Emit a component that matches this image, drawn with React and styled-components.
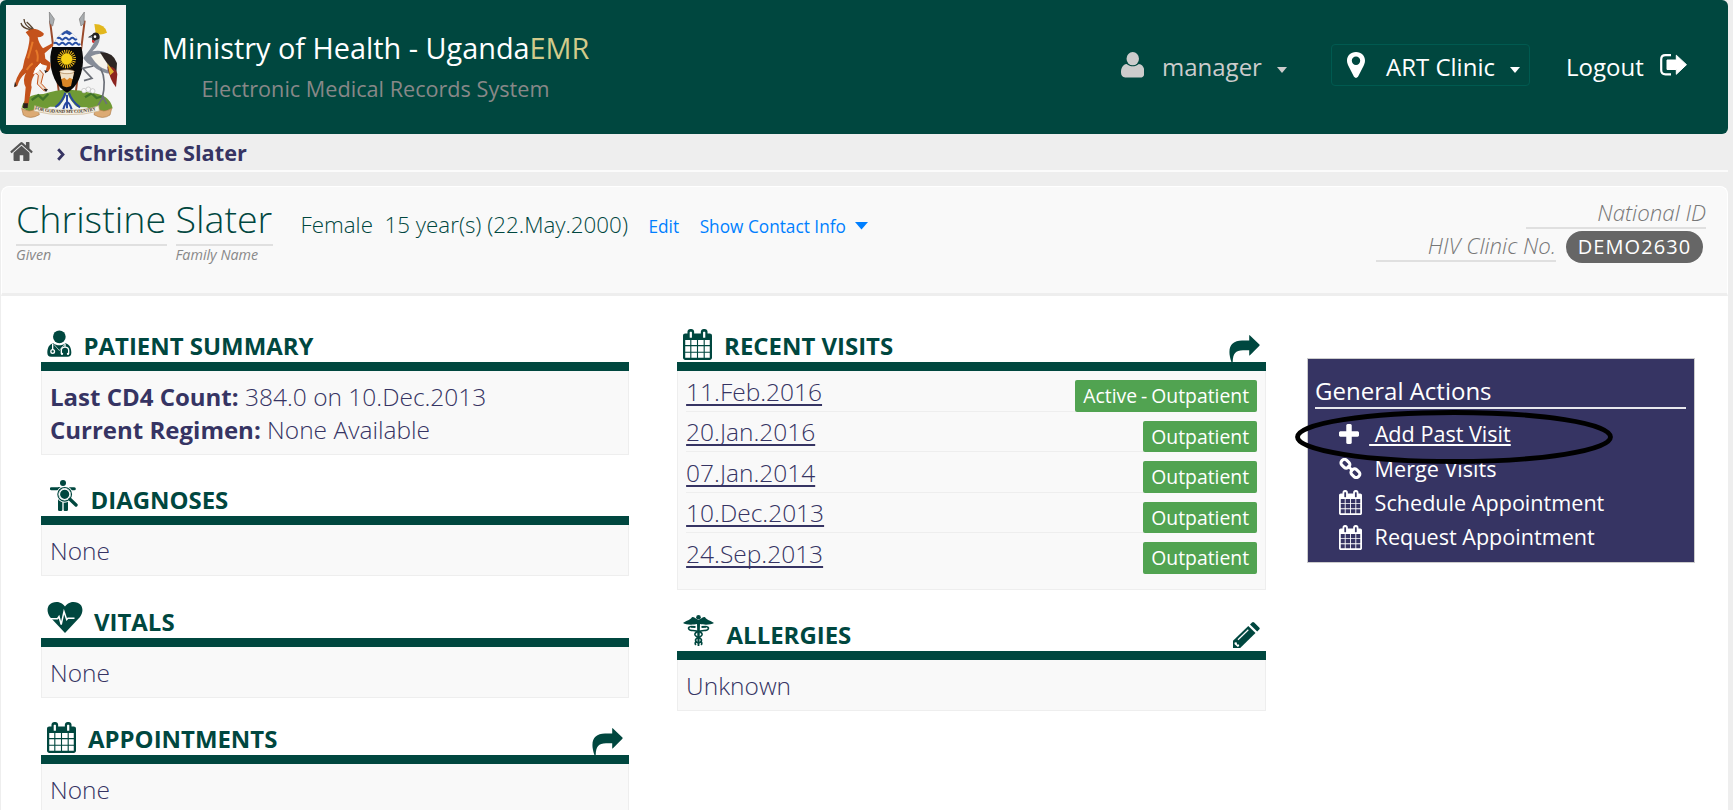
import React from 'react';
import styled, { createGlobalStyle } from 'styled-components';

const green = '#00473f';
const navy = '#363463';

const Global = createGlobalStyle`
  * { box-sizing: border-box; }
  body { margin: 0; background: #eee; font-family: "Open Sans", "Noto Sans", sans-serif; color: ${navy}; overflow: hidden; }
  a { color: inherit; }
  svg { display: block; flex: none; }
`;

const Page = styled.div`
  width: 1728px;
  height: 810px;
  overflow: hidden;
  display: flex;
  flex-direction: column;
`;

/* ---------- top bar ---------- */
const TopBar = styled.header`
  flex: none;
  height: 134px;
  background: ${green};
  border-radius: 6px;
  display: flex;
  align-items: flex-start;
  padding: 5px 0 0 6px;
`;
const Crest = styled.svg`
  width: 120px;
  height: 120px;
  background: #f4f4f4;
`;
const Brand = styled.div`
  width: 427px;
  margin-left: 36px;
  padding-top: 23px;
  text-align: center;
  white-space: nowrap;
`;
const BrandTitle = styled.div`
  font-size: 28.85px;
  line-height: 40px;
  color: #fff;
`;
const Gold = styled.span`color: #d2cb8b;`;
const BrandSub = styled.div`
  font-size: 21.65px;
  line-height: 42px;
  color: #888;
`;
const UserMenu = styled.nav`
  margin-left: auto;
  margin-top: 39px;
  height: 42px;
  display: flex;
  align-items: center;
  font-size: 24px;
  line-height: 42px;
  color: #fff;
  padding-right: 41px;
  white-space: nowrap;
`;
const UserItem = styled.div`
  display: flex;
  align-items: center;
  color: #ccc;
  margin-right: 44px;
`;
const LocationItem = styled.div`
  display: flex;
  align-items: center;
  width: 199px;
  height: 42px;
  border: 1.5px solid #005a50;
  border-radius: 4px;
  padding-left: 15px;
  margin-right: 36px;
`;
const MenuLabel = styled.span`
  width: ${p => p.$w}px;
  padding-top: 4px;
  margin-left: ${p => p.$gap}px;
`;
const LogoutSlot = styled.span`margin-left: 16px;`;
const Caret = styled.i`
  border: ${p => p.$s}px solid transparent;
  border-top: ${p => p.$h}px solid currentColor;
  border-bottom: 0;
  margin-top: ${p => p.$drop || 0}px;
  margin-left: ${p => p.$gap}px;
`;

/* ---------- breadcrumbs ---------- */
const Crumbs = styled.div`
  flex: none;
  height: 38px;
  border-bottom: 2px solid #fbfbfb;
  display: flex;
  align-items: center;
  padding: 0 0 1px 10px;
  font-size: 21.7px;
  font-weight: 700;
`;
const CrumbArrow = styled.svg`margin: 6px 14px 0 24px;`;
const CrumbText = styled.span`padding-top: 2px;`;

/* ---------- patient header ---------- */
const PatientBar = styled.section`
  flex: none;
  height: 110px;
  margin: 14px 0 0 1px;
  background: #f9f9f9;
  border: 1px solid #fff;
  border-bottom: 3px solid #eee;
  border-radius: 8px 8px 0 0;
  display: flex;
  padding-left: 14px;
  color: ${green};
`;
const NamePart = styled.div`
  width: ${p => p.$w}px;
  margin-right: 9px;
  padding-top: 7px;
`;
const BigName = styled.div`
  font-size: 37.6px;
  font-weight: 300;
  line-height: 49px;
  height: 52px;
  border-bottom: 2px solid #e0e0e0;
  white-space: nowrap;
`;
const NameHint = styled.div`
  font-size: 14.3px;
  font-style: italic;
  line-height: 20px;
  color: #888;
  margin-top: -1px;
`;
const Demographics = styled.div`
  display: flex;
  align-items: baseline;
  margin-left: 18.5px;
  height: 50px;
  padding-top: 22px;
  font-size: 22.35px;
  line-height: 32px;
  white-space: pre;
  font-weight: 300;
`;
const ActionLink = styled.a`
  font-size: 17.25px;
  font-weight: 400;
  color: #007fff;
  margin-left: ${p => p.$gap}px;
`;
const Identifiers = styled.div`
  margin-left: auto;
  padding: 10px 21px 0 0;
  display: flex;
  flex-direction: column;
  align-items: flex-end;
`;
const IdRow = styled.div`
  display: flex;
  height: 33px;
`;
const IdLabel = styled.div`
  width: 180px;
  height: 32px;
  border-bottom: 2px solid #e0e0e0;
  text-align: right;
  font-size: 22.3px;
  line-height: 32px;
  font-style: italic;
  font-weight: 300;
  color: #777;
`;
const IdBadge = styled.div`
  width: 137px;
  height: 32px;
  margin: 1px 3px 0 10px;
  border-radius: 16px;
  background: #666;
  color: #fff;
  font-size: 20px;
  line-height: 31px;
  letter-spacing: 1.1px;
  text-align: center;
`;

/* ---------- dashboard ---------- */
const Dashboard = styled.main`
  flex: 1;
  margin-left: 1px;
  background: #fff;
  display: flex;
  align-items: flex-start;
  padding: 30px 33px 0 39.5px;
`;
const Column = styled.div`
  width: ${p => p.$w}px;
  margin-right: ${p => p.$gap}px;
`;
const Widget = styled.section`margin-bottom: ${p => p.$gap}px;`;
const WidgetHead = styled.div`
  height: 45px;
  border-bottom: 9px solid ${green};
  display: flex;
  align-items: flex-end;
  padding: 0 6px 0 6px;
  color: ${green};
`;
const WidgetIcon = styled.span`
  width: ${p => p.$w}px;
  padding: 0 0 ${p => p.$up}px ${p => p.$left || 0}px;
`;
const WidgetTitle = styled.h2`
  flex: 1;
  margin: 0;
  font-size: 23.95px;
  font-weight: 700;
  line-height: 32px;
  white-space: nowrap;
`;
const WidgetBody = styled.div`
  border: 1.5px solid #eee;
  border-top: 0;
  background: #f9f9f9;
  padding: 9px 8px 8px 8.5px;
  font-size: 24.5px;
  font-weight: 300;
  line-height: 33px;
`;
const Fact = styled.div`
  b { font-weight: 700; font-size: 24px; }
`;
const VisitList = styled(WidgetBody)`padding: 0 8px 15px 8.5px;`;
const VisitRow = styled.div`
  height: 40.5px;
  display: flex;
  justify-content: space-between;
  align-items: flex-start;
  border-bottom: 1.5px solid ${p => (p.$last ? 'transparent' : '#eee')};
`;
const VisitLink = styled.a`
  margin-top: 3.6px;
  text-decoration: underline;
  text-decoration-thickness: 1.5px;
  text-underline-offset: 2.5px;
  text-decoration-skip-ink: none;
`;
const VisitTag = styled.span`
  margin-top: 9px;
  height: 31.5px;
  padding: 0 8px;
  border-radius: 2px;
  background: #51a351;
  color: #fff;
  font-size: 19.35px;
  font-weight: 400;
  line-height: 31px;
  word-spacing: -1px;
`;

const ActionsWrap = styled.aside`
  position: relative;
  width: 388px;
  margin-top: 32px;
`;
const Actions = styled.div`
  height: 204.5px;
  background: ${navy};
  border: 1.5px solid #ccc;
  padding: 16px 7.5px 0 7px;
  color: #fff;
`;
const ActionsTitle = styled.div`
  height: 34px;
  border-bottom: 2px solid #e8e8ee;
  font-size: 24px;
  line-height: 32px;
`;
const ActionList = styled.div`padding: 8px 0 0 24px;`;
const ActionRow = styled.div`
  display: flex;
  align-items: center;
  height: 34.4px;
  font-size: 21.6px;
  line-height: 34px;
  white-space: pre;
`;
const ActionIcon = styled.span`width: 30px;`;
const ActionText = styled.span`
  margin-left: ${p => (p.$underlined ? 0 : 5.5)}px;
  text-decoration: ${p => (p.$underlined ? 'underline' : 'none')};
  text-decoration-thickness: 1.5px;
  text-underline-offset: 2px;
`;
const Ring = styled.svg`
  position: absolute;
  left: -13px;
  top: 51px;
`;

/* ---------- icons ---------- */
const CAL = 'M192 1664h288v-288h-288v288zM544 1664h320v-288h-320v288zM192 1312h288v-320h-288v320zM544 1312h320v-320h-320v320zM192 928h288v-288h-288v288zM928 1664h320v-288h-320v288zM544 928h320v-288h-320v288zM1312 1664h288v-288h-288v288zM928 1312h320v-320h-320v320zM576 480v-288q0-13-9.5-22.5t-22.5-9.5h-64q-13 0-22.5 9.5t-9.5 22.5v288q0 13 9.5 22.5t22.5 9.5h64q13 0 22.5-9.5t9.5-22.5zM1312 1312h288v-320h-288v320zM928 928h320v-288h-320v288zM1312 928h288v-288h-288v288zM1344 480v-288q0-13-9.5-22.5t-22.5-9.5h-64q-13 0-22.5 9.5t-9.5 22.5v288q0 13 9.5 22.5t22.5 9.5h64q13 0 22.5-9.5t9.5-22.5zM1728 384v1280q0 52-38 90t-90 38h-1408q-52 0-90-38t-38-90v-1280q0-52 38-90t90-38h128v-96q0-66 47-113t113-47h64q66 0 113 47t47 113v96h384v-96q0-66 47-113t113-47h64q66 0 113 47t47 113v96h128q52 0 90 38t38 90z';
const HOME = 'M1408 992v480q0 26-19 45t-45 19h-384v-384h-256v384h-384q-26 0-45-19t-19-45v-480q0-1 .5-3t.5-3l575-474 575 474q1 2 1 6zm223-69l-62 74q-8 9-21 11h-3q-13 0-21-7l-692-577-692 577q-12 8-24 7-13-2-21-11l-62-74q-8-10-7-23.5t11-21.5l719-599q32-26 76-26t76 26l244 204v-195q0-14 9-23t23-9h192q14 0 23 9t9 23v408l219 182q10 8 11 21.5t-7 23.5z';
const PLUS = 'M1408 800v192q0 40-28 68t-68 28h-416v416q0 40-28 68t-68 28h-192q-40 0-68-28t-28-68v-416h-416q-40 0-68-28t-28-68v-192q0-40 28-68t68-28h416v-416q0-40 28-68t68-28h192q40 0 68 28t28 68v416h416q40 0 68 28t28 68z';

const CalendarIcon = ({ w, h }) => (
  <svg width={w} height={h} viewBox="64 0 1664 1792" preserveAspectRatio="none" fill="currentColor"><path d={CAL} /></svg>
);
const ShareIcon = () => (
  <svg width="31" height="27" viewBox="0 0 31 27" fill="currentColor">
    <path d="M20.2 .6 Q20.2 -.4 21 .4 L30.4 9.4 Q31 10 30.4 10.7 L21 20.3 Q20.2 21 20.2 20 V15.2 H14 C6.5 15.2 4 18.5 3.7 27 H2.4 C-2.5 13 2 5.6 13 5.6 H20.2 Z" />
  </svg>
);
const DoctorIcon = () => (
  <svg width="25" height="27" viewBox="0 0 75 80">
    <circle cx="37" cy="20" r="19" fill={green} />
    <path d="M19 39 C6 42 1 53 1 68 C1 76 5 80 12 80 H62 C69 80 73 76 73 68 C73 53 68 42 55 39 C45 47 29 47 19 39Z" fill={green} />
    <path d="M17 41 V60 M54 41 V51 M43 71 V61 C43 54 47 51 54 51 C61 51 65 54 65 61 V71" fill="none" stroke="#fff" strokeWidth="4" />
    <circle cx="17" cy="64" r="5.5" fill={green} stroke="#fff" strokeWidth="4" />
    <path d="M21 43 L37 61 L52 43" fill="none" stroke="#fff" strokeWidth="2" />
    <circle cx="45" cy="71" r="3.5" fill="#fff" /><circle cx="63" cy="71" r="3.5" fill="#fff" />
  </svg>
);
const DiagnosisIcon = () => (
  <svg width="28" height="31" viewBox="0 0 84 93">
    <circle cx="39" cy="9" r="9" fill={green} />
    <path d="M4 26 H73" stroke={green} strokeWidth="9" strokeLinecap="round" />
    <path d="M24 22 H54 V89 Q54 93 50 93 H44 Q41 93 41 89 V66 H37 V89 Q37 93 33 93 H28 Q24 93 24 89Z" fill={green} />
    <path d="M62 60 L79 77" stroke="#fff" strokeWidth="15" />
    <circle cx="44" cy="43" r="21" fill={green} stroke="#fff" strokeWidth="8" />
    <circle cx="44" cy="43" r="20.5" fill="none" stroke={green} strokeWidth="3.5" />
    <circle cx="44" cy="43" r="15.5" fill="none" stroke="#fff" strokeWidth="3.5" />
    <path d="M60 58 L78 75" stroke={green} strokeWidth="10" strokeLinecap="round" />
  </svg>
);
const HeartIcon = () => (
  <svg width="36" height="31" viewBox="0 0 36 31">
    <path d="M18 31 L3 15 C-1.5 9 0 0 9.5 0 C14 0 16.5 2.5 18 4.5 C19.5 2.5 22 0 26.5 0 C36 0 37.5 9 33 15Z" fill={green} />
    <path d="M4 16.7 H10.5 L12 14.5 L14.2 22.5 L17 9.5 L19.7 17.5 L21 16.2 H27.5" fill="none" stroke="#fff" strokeWidth="1.5" />
  </svg>
);
const CaduceusIcon = () => (
  <svg width="31" height="31" viewBox="0 0 31 31" fill={green}>
    <circle cx="15.5" cy="2.3" r="2.3" />
    <path d="M15.5 5 C18 4 19 2 22 2 C23 5 28 5.5 31 8 C28 10 21 10 17 9 L16.4 31 H14.6 L14 9 C10 10 3 10 0 8 C3 5.5 8 5 9 2 C12 2 13 4 15.5 5Z" />
    <path d="M8 11.5 C4 12 5 15.5 10 15.5 C14 15.8 20 17 19 20 C18 22.5 12.5 22.5 12.5 25 Q12.5 27 15.5 28 M23 11.5 C27 12 26 15.5 21 15.5 C17 15.8 11 17 12 20 C13 22.5 18.5 22.5 18.5 25 Q18.5 27 15.5 28 M12.8 30 Q11.5 28 13 26.5 M18.2 30 Q19.5 28 18 26.5" fill="none" stroke={green} strokeWidth="1.6" />
    <path d="M8 11.7 L12.5 12 M23 11.7 L18.5 12" stroke={green} strokeWidth="2" />
  </svg>
);
const PencilIcon = () => (
  <svg width="27" height="26" viewBox="0 0 27 26">
    <path d="M0 26 V18.8 L15.3 4 L22.5 11 L7.2 26Z" fill={green} />
    <path d="M17 2.4 L19 .6 Q20 -.4 21.2 .6 L26.2 5.4 Q27.3 6.5 26.2 7.6 L24.2 9.4Z" fill={green} />
    <path d="M5 17.8 L15.3 7.8" stroke="#fff" strokeWidth="1.2" />
    <path d="M1.8 20.2 L3.8 20.4 L4 22.4 L6 22.6 L6.2 23.9 L4.8 25 L1.4 22Z" fill="#fff" />
  </svg>
);
const UserIcon = () => (
  <svg width="23.5" height="25.5" viewBox="0 0 25 26" preserveAspectRatio="none" fill="#ccc">
    <ellipse cx="12.5" cy="6.8" rx="6.6" ry="6.8" />
    <path d="M6 12.3 C1.5 12.8 0 17 0 21 C0 24 1.6 26 4.5 26 H20.5 C23.4 26 25 24 25 21 C25 17 23.5 12.8 19 12.3 C15 15.4 10 15.4 6 12.3Z" />
  </svg>
);
const PinIcon = () => (
  <svg width="18" height="26" viewBox="0 0 18 26">
    <path fill="#fff" fillRule="evenodd" d="M9 0 C3.5 0 0 3.8 0 8.6 C0 11 .8 12.6 1.6 14.3 L7 24.8 Q9 27 11 24.8 L16.4 14.3 C17.2 12.6 18 11 18 8.6 C18 3.8 14.5 0 9 0Z M9 4.6 A4.2 4.2 0 1 1 9 13 A4.2 4.2 0 1 1 9 4.6Z" />
  </svg>
);
const LogoutIcon = () => (
  <svg width="27" height="22" viewBox="0 0 27 22">
    <path d="M11 1.2 H5.5 Q1.2 1.2 1.2 5.5 V16 Q1.2 20.3 5.5 20.3 H11" fill="none" stroke="#fff" strokeWidth="2.2" />
    <path d="M16.3 1.2 L26.5 10.7 L16.3 20.3 V15.5 H7 V6 H16.3Z" fill="#fff" stroke="#fff" strokeWidth="1" strokeLinejoin="round" />
  </svg>
);
const LinkIcon = () => (
  <svg width="23" height="21" viewBox="0 0 23 21" fill="none" stroke="#fff" strokeWidth="3.1">
    <rect x="-4.6" y="-3.4" width="9.2" height="6.8" rx="3" transform="translate(6.4 5.7) rotate(43)" />
    <rect x="-4.6" y="-3.4" width="9.2" height="6.8" rx="3" transform="translate(16.4 15.2) rotate(43)" />
    <path d="M8.5 7.5 L14 13" strokeWidth="2.6" />
  </svg>
);

const CoatOfArms = () => (
  <Crest viewBox="18 15 360 360">
    <path d="M150 62 L178 288 M254 62 L226 288" stroke="#9a4a2b" strokeWidth="6" />
    <path d="M148 36 L163 57 L158 78 L149 70Z M253 36 L238 57 L243 78 L252 70Z" fill="#a9adb0" stroke="#777" strokeWidth="2" />
    <path d="M65 322 Q75 282 130 282 Q200 258 270 278 Q330 282 338 325 Q300 345 260 322 L150 320 Q100 350 65 322Z" fill="#6f9a35" />
    <path d="M95 300 l20-14 14 12 16-16 M255 292 l20-12 15 14 20-6" stroke="#3f7429" strokeWidth="7" fill="none" />
    <g fill="#f8f8f8" stroke="#aaa" strokeWidth="1.5"><circle cx="252" cy="272" r="7" /><circle cx="265" cy="268" r="7" /><circle cx="278" cy="273" r="7" /></g>
    <path d="M170 325 Q195 302 201 275 Q208 302 236 325 L222 331 L200 322 L182 331Z" fill="#f4f4f4" />
    <path d="M166 322 Q190 302 196 278 M240 322 Q214 302 207 278 M201 284 V325 M190 328 Q201 285 215 328" stroke="#2747a0" strokeWidth="6" fill="none" />
    <path d="M201 91 C175 101 155 130 151 170 C149 220 170 262 201 278 C232 262 251 220 249 170 C246 130 226 101 201 91Z" fill="#080808" />
    <path d="M201 91 C181 99 165 116 157 141 H245 C237 116 221 99 201 91Z" fill="#f5f7fb" />
    <path d="M201 91 Q190 96 183 103 q6 5 10 0 t10 0 10 0 7 0 Q212 96 201 91Z" fill="#2850a5" />
    <path d="M172 116 q5-6 10 0 t10 0 10 0 10 0 10 0 8 0 M162 131 q5-6 10 0 t10 0 10 0 10 0 10 0 10 0 10 0 8 0" fill="none" stroke="#2850a5" strokeWidth="6" />
    <circle cx="200" cy="177" r="22" fill="none" stroke="#efb91b" strokeWidth="12" strokeDasharray="3 3" />
    <circle cx="200" cy="177" r="17" fill="#f6cf15" />
    <path d="M180 217 L188 258 Q200 265 213 258 L222 217Z" fill="#d98526" />
    <path d="M180 217 L184 238 L193 233 L201 240 L209 233 L218 238 L222 217Z" fill="#efe0c8" />
    <ellipse cx="201" cy="215" rx="22" ry="6" fill="#f6ead6" stroke="#a77d4e" strokeWidth="2" />
    <path d="M91 87 Q111 84 131 100 Q133 108 121 111 L113 112 Q116 130 129 145 L157 130 L160 137 L134 160 L136 176 L151 188 Q155 203 143 216 L137 212 L141 197 L122 192 Q112 206 103 224 Q90 245 95 262 L84 318 L72 318 L77 262 Q66 240 78 218 Q58 234 52 258 L44 262 Q45 235 68 205 Q72 180 80 160 Q90 125 88 111 L77 97Z" fill="#c4521b" />
    <path d="M108 198 L130 222 L123 250 L140 268 L133 273 L112 252 L115 226 L101 214Z" fill="#f3e1cf" stroke="#c4521b" strokeWidth="3" />
    <path d="M121 190 Q106 205 101 221 Q112 218 127 198Z" fill="#fff" stroke="#fff" strokeWidth="3" />
    <path d="M84 175 Q92 150 98 125 M80 210 Q90 195 98 190 M108 150 Q116 165 112 185" stroke="#e77a2a" strokeWidth="6" fill="none" />
    <path d="M91 89 Q66 84 63 69 M96 87 Q73 78 72 57 M100 87 Q88 72 80 66" stroke="#57422f" strokeWidth="4" fill="none" />
    <path d="M45 245 L42 261 L50 258Z M70 310 L84 310 L83 324 L69 324Z M130 266 L144 268 L138 276Z M133 210 L144 214 L136 220Z" fill="#2b211c" />
    <path d="M283 72 Q315 72 321 98 Q300 108 287 99Z" fill="#e2b71c" />
    <path d="M264 112 L276 104 Q282 95 293 99 Q302 106 298 117 Q290 126 277 121 L276 114Z" fill="#222" />
    <path d="M264 113 L276 108 L277 114Z" fill="#8b98a2" />
    <circle cx="285" cy="110" r="4" fill="#fff" /><path d="M276 120 Q283 118 286 127 Q280 132 276 126Z" fill="#cf2d2d" />
    <path d="M287 120 L299 117 Q297 137 277 154 Q310 148 326 165 Q337 185 335 222 Q303 220 279 198 Q258 190 250 174 Q272 148 287 120Z" fill="#868d98" />
    <path d="M273 169 Q300 155 320 167 Q325 190 322 210 Q295 205 273 169Z" fill="#f7f4ea" />
    <path d="M300 157 Q340 155 351 190 L349 222 Q325 200 300 157Z" fill="#2d2623" />
    <path d="M322 200 Q345 195 352 222 L348 262 Q330 240 322 200Z" fill="#8b2420" />
    <path d="M322 190 L342 215 L330 226Z" fill="#dfb133" />
    <path d="M302 206 Q321 240 306 298 M280 198 L248 205 L276 235 L252 242 M308 290 L320 312 M306 296 L294 316" stroke="#6c7078" strokeWidth="5" fill="none" />
    <path d="M65 325 Q90 342 113 322 L118 344 Q90 360 70 345Z M335 325 Q310 342 287 322 L282 344 Q308 360 330 345Z" fill="#dcaa74" stroke="#ad7c49" strokeWidth="2" />
    <path d="M104 317 Q150 333 200 330 Q250 333 296 317 L298 333 Q250 346 200 344 Q150 346 102 333Z" fill="#f6efe2" stroke="#c7b08c" strokeWidth="2" />
    <path id="motto" d="M104 328 Q150 341 200 339 Q250 341 297 328" fill="none" />
    <text fontFamily="Liberation Serif" fontSize="14" fontWeight="700" fill="#4b3a2b" textLength="186"><textPath href="#motto">FOR GOD AND MY COUNTRY</textPath></text>
  </Crest>
);

function Section({ icon, iconWidth, iconUp, iconLeft, title, action, gap, Body = WidgetBody, children }) {
  return (
    <Widget $gap={gap}>
      <WidgetHead>
        <WidgetIcon $w={iconWidth} $up={iconUp} $left={iconLeft}>{icon}</WidgetIcon>
        <WidgetTitle>{title}</WidgetTitle>
        {action}
      </WidgetHead>
      <Body>{children}</Body>
    </Widget>
  );
}

const PencilSlot = styled.span`padding-bottom: 3px;`;

const visits = [
  ['11.Feb.2016', 'Active - Outpatient'],
  ['20.Jan.2016', 'Outpatient'],
  ['07.Jan.2014', 'Outpatient'],
  ['10.Dec.2013', 'Outpatient'],
  ['24.Sep.2013', 'Outpatient'],
];

const actions = [
  { text: ' Add Past Visit', underlined: true, icon: <svg width="20" height="20" viewBox="0 192 1408 1408" fill="#fff"><path d={PLUS} /></svg> },
  { text: 'Merge Visits', icon: <LinkIcon /> },
  { text: 'Schedule Appointment', icon: <CalendarIcon w={23} h={25} /> },
  { text: 'Request Appointment', icon: <CalendarIcon w={23} h={25} /> },
];

export default function App() {
  return (
    <>
      <Global />
      <Page>
        <TopBar>
          <CoatOfArms />
          <Brand>
            <BrandTitle>Ministry of Health - Uganda<Gold>EMR</Gold></BrandTitle>
            <BrandSub>Electronic Medical Records System</BrandSub>
          </Brand>
          <UserMenu>
            <UserItem>
              <UserIcon />
              <MenuLabel $w={98} $gap={18}>manager</MenuLabel>
              <Caret $s={5.5} $h={6} $gap={17} $drop={9} />
            </UserItem>
            <LocationItem>
              <PinIcon />
              <MenuLabel $w={109} $gap={21}>ART Clinic</MenuLabel>
              <Caret $s={5.5} $h={6} $gap={15} $drop={9} />
            </LocationItem>
            <MenuLabel $w={78} $gap={0}>Logout</MenuLabel>
            <LogoutSlot><LogoutIcon /></LogoutSlot>
          </UserMenu>
        </TopBar>

        <Crumbs>
          <svg width="23" height="19" viewBox="0 253 1664 1283" preserveAspectRatio="none" fill="#555"><path d={HOME} /></svg>
          <CrumbArrow width="8" height="13" viewBox="0 0 8 13"><path d="M1.2 1.2 L6 6.5 L1.2 11.8" fill="none" stroke={navy} strokeWidth="2.8" /></CrumbArrow>
          <CrumbText>Christine Slater</CrumbText>
        </Crumbs>

        <PatientBar>
          <NamePart $w={150.5}><BigName>Christine</BigName><NameHint>Given</NameHint></NamePart>
          <NamePart $w={97.5}><BigName>Slater</BigName><NameHint>Family Name</NameHint></NamePart>
          <Demographics>
            <span>Female  15 year(s) (22.May.2000)</span>
            <ActionLink $gap={20.5}>Edit</ActionLink>
            <ActionLink $gap={20.5}>Show Contact Info</ActionLink>
            <ActionLink as="span" $gap={9}>
              <svg width="13" height="11" viewBox="0 0 13 11"><path d="M0 0 H13 L6.5 7.4Z" fill="#007fff" /></svg>
            </ActionLink>
          </Demographics>
          <Identifiers>
            <IdRow><IdLabel>National ID</IdLabel></IdRow>
            <IdRow><IdLabel>HIV Clinic No.</IdLabel><IdBadge>DEMO2630</IdBadge></IdRow>
          </Identifiers>
        </PatientBar>

        <Dashboard>
          <Column $w={588.5} $gap={47.8}>
            <Section title="PATIENT SUMMARY" icon={<DoctorIcon />} iconWidth={37} iconUp={5} gap={25}>
              <Fact><b>Last CD4 Count:</b> 384.0 on 10.Dec.2013</Fact>
              <Fact><b>Current Regimen:</b> None Available</Fact>
            </Section>
            <Section title="DIAGNOSES" icon={<DiagnosisIcon />} iconWidth={44} iconUp={5} iconLeft={3} gap={26}>None</Section>
            <Section title="VITALS" icon={<HeartIcon />} iconWidth={47.5} iconUp={5} gap={21}>None</Section>
            <Section title="APPOINTMENTS" icon={<CalendarIcon w={29} h={31} />} iconWidth={41.5} iconUp={2.5} action={<ShareIcon />}>None</Section>
          </Column>

          <Column $w={589.7} $gap={41}>
            <Section title="RECENT VISITS" icon={<CalendarIcon w={29} h={31} />} iconWidth={41.5} iconUp={2.5} gap={25.5} action={<ShareIcon />} Body={VisitList}>
              {visits.map(([date, tag], i) => (
                <VisitRow key={date} $last={i === visits.length - 1}>
                  <VisitLink>{date}</VisitLink>
                  <VisitTag>{tag}</VisitTag>
                </VisitRow>
              ))}
            </Section>
            <Section title="ALLERGIES" icon={<CaduceusIcon />} iconWidth={44} iconUp={5.5} action={<PencilSlot><PencilIcon /></PencilSlot>}>Unknown</Section>
          </Column>

          <ActionsWrap>
            <Actions>
              <ActionsTitle>General Actions</ActionsTitle>
              <ActionList>
                {actions.map(a => (
                  <ActionRow key={a.text}>
                    <ActionIcon>{a.icon}</ActionIcon>
                    <ActionText $underlined={a.underlined}>{a.text}</ActionText>
                  </ActionRow>
                ))}
              </ActionList>
            </Actions>
            <Ring width="320" height="56" viewBox="0 0 320 56">
              <ellipse cx="160" cy="28" rx="156.5" ry="24.5" fill="none" stroke="#000" strokeWidth="4.8" />
            </Ring>
          </ActionsWrap>
        </Dashboard>
      </Page>
    </>
  );
}
